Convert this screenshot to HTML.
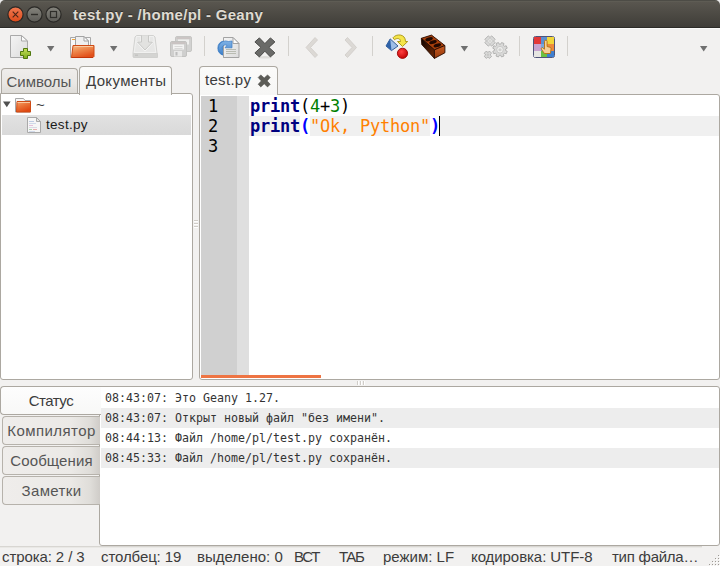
<!DOCTYPE html>
<html lang="ru">
<head>
<meta charset="utf-8">
<title>test.py - /home/pl - Geany</title>
<style>
html,body{margin:0;padding:0;}
body{width:720px;height:566px;overflow:hidden;background:#f2f1f0;position:relative;
  font-family:"Liberation Sans","DejaVu Sans",sans-serif;color:#3c3c3c;}
.abs{position:absolute;}
#corner{left:0;top:0;width:720px;height:10px;background:#ececec;}
#titlebar{left:0;top:0;width:720px;height:28px;background:linear-gradient(#4d4c46 0,#4d4c46 1px,#5e5c54 1px,#5e5c54 2px,#59564f 2px,#3f3d38 27px,#2c2b28 27px,#2c2b28 28px);border-radius:5px 5px 0 0;}
#title{left:73px;top:6px;font-size:15px;font-weight:bold;color:#dfdbd2;white-space:nowrap;line-height:18px;letter-spacing:.29px;text-shadow:0 -1px 0 rgba(0,0,0,.4);}
#toolbar{left:0;top:28px;width:720px;height:39px;background:linear-gradient(#fafaf9 0,#fafaf9 1px,#f2f1f0 1px,#f2f1f0 100%);}
.tab{box-sizing:border-box;border:1px solid #aca8a1;border-bottom:none;border-radius:4px 4px 0 0;font-size:15px;white-space:nowrap;}
.panel{box-sizing:border-box;background:#fff;border:1px solid #aca8a1;border-radius:3px;}
.mono{font-family:"DejaVu Sans Mono","Liberation Mono",monospace;}
#code{left:250px;top:96px;font-size:17px;letter-spacing:-0.234px;line-height:20px;white-space:pre;color:#000;}
#lnum{left:208px;top:96px;font-size:17px;line-height:20px;white-space:pre;color:#000;}
.kw{font-weight:bold;color:#00007f;}
.num{color:#007f00;}
.str{color:#ff8000;}
.br{color:#0000ff;font-weight:bold;}
#msgs div{height:20px;line-height:20px;font-size:11.63px;white-space:pre;padding-left:4px;margin-left:1px;color:#333;}
.st{top:548px;font-size:15px;line-height:17px;white-space:nowrap;color:#3c3c3c;}
.mt{left:2px;width:98px;height:29px;box-sizing:border-box;border:1px solid #b6b2ab;border-right:none;border-radius:4px 0 0 4px;font-size:15px;text-align:center;line-height:28px;background:linear-gradient(90deg,#efedeb 0,#ebe9e6 70%,#dfddd9 90%,#cfccc8 100%);color:#555;}
</style>
</head>
<body>
<div id="corner" class="abs"></div>
<div id="titlebar" class="abs"></div>
<div id="title" class="abs">test.py - /home/pl - Geany</div>
<div id="toolbar" class="abs"></div>
<svg class="abs" style="left:0;top:27px;" width="720" height="40" viewBox="0 0 720 40">
<defs>
<linearGradient id="gpage" x1="0" y1="0" x2="1" y2="1"><stop offset="0" stop-color="#f4f4f4"/><stop offset="1" stop-color="#dcdcdc"/></linearGradient>
<linearGradient id="gfold" x1="0" y1="0" x2="0.500" y2="1"><stop offset="0" stop-color="#f7c08c"/><stop offset="0.450" stop-color="#ee8a4e"/><stop offset="1" stop-color="#e2501a"/></linearGradient>
<linearGradient id="ggreen" x1="0" y1="0" x2="0" y2="1"><stop offset="0" stop-color="#c6e05a"/><stop offset="1" stop-color="#7cab1e"/></linearGradient>
<linearGradient id="gblue" x1="0" y1="0" x2="0" y2="1"><stop offset="0" stop-color="#7fb2e6"/><stop offset="1" stop-color="#3d7fc8"/></linearGradient>
<radialGradient id="gred" cx="0.4" cy="0.35" r="0.7"><stop offset="0" stop-color="#ff4040"/><stop offset="1" stop-color="#c00000"/></radialGradient>
<linearGradient id="gbrickL" x1="0" y1="0" x2="1" y2="1"><stop offset="0" stop-color="#0c0200"/><stop offset="1" stop-color="#742a04"/></linearGradient>
<linearGradient id="gbrickR" x1="0" y1="0" x2="0" y2="1"><stop offset="0" stop-color="#c85a20"/><stop offset="1" stop-color="#94380a"/></linearGradient>
</defs>
<!-- new document -->
<path d="M10.5 8.500h11l6 5.500v16.500h-17z" fill="url(#gpage)" stroke="#a9a9a9"/>
<path d="M21.500 8.500v5.500h6z" fill="#fbfbfb" stroke="#a9a9a9" stroke-linejoin="round"/>
<path d="M23.5 21.5h4v3h3v4h-3v3h-4v-3h-3v-4h3z" fill="url(#ggreen)" stroke="#50780f" stroke-linejoin="round"/>
<path d="M47 19h7.4l-3.7 5.6z" fill="#707070"/>
<!-- open folder -->
<path d="M70.500 10.500h20v20h-20z" fill="#f7f7f7" stroke="#a9a9a9"/>
<path d="M75.500 9.500h8.500l4.500 4.500v16h-13z" fill="#efefef" stroke="#a3a3a3"/>
<path d="M84 9.500v4.500h4.500z" fill="#fcfcfc" stroke="#a3a3a3" stroke-linejoin="round"/>
<rect x="72" y="12" width="3" height="1" fill="#f0a43a"/>
<path d="M73 18.500h21v11l-1 1h-21.500z" fill="url(#gfold)" stroke="#cf4a14" stroke-linejoin="round"/>
<path d="M71.500 30.500h21.500" stroke="#c2350a" stroke-width="1"/>
<path d="M74.500 19.500h18.500" stroke="#f9c9a0" stroke-width="1"/>
<path d="M110 19h7.400l-3.700 5.600z" fill="#707070"/>
<!-- save (disabled) -->
<path d="M136.500 8.500h17l1.500 1.500l2 16v3.500l-1 1h-22l-1-1v-3.500l2-16z" fill="#e7e7e6" stroke="#d2d2d0" stroke-linejoin="round"/>
<path d="M136.500 9.500h17l2.300 16h-21.600z" fill="none" stroke="#f1f1f0" stroke-width="1"/>
<path d="M133.500 26.500h24v4h-24z" fill="#d4d4d2" stroke="#d0d0ce"/>
<rect x="135" y="27.500" width="3" height="1.500" fill="#c4c4c2"/>
<path d="M141.500 10.500h7v4.500h4l-7.500 8l-7.500-8h4z" fill="#e2e2e0" stroke="#f6f6f5" stroke-width="2.200" stroke-linejoin="round"/>
<path d="M141.500 8.500v6.500h-4l7.500 8l7.500-8h-4v-6.500" fill="#e2e2e0" stroke="#c4c4c2" stroke-width="0.900" stroke-linejoin="round"/>
<!-- save all (disabled) -->
<rect x="175.500" y="9.500" width="16" height="15" rx="1.500" fill="#d2d2d1" stroke="#c6c6c4"/>
<rect x="176.500" y="10" width="14" height="2" fill="#cbc5c4"/>
<rect x="178" y="12.500" width="11" height="5" fill="#efefee"/>
<rect x="170.500" y="14.500" width="16" height="15" rx="1.500" fill="#cfcfce" stroke="#c2c2c0"/>
<rect x="171.500" y="15" width="14" height="2" fill="#c9c3c2"/>
<rect x="173" y="17.500" width="11" height="5" fill="#f3f3f2"/>
<path d="M174.500 19.500h8M174.500 21.500h8" stroke="#d9d9d8" stroke-width="1"/>
<rect x="174" y="24" width="8" height="5.500" fill="#e9e9e8"/>
<rect x="175.500" y="25" width="2" height="3.500" fill="#bcbcbb"/>
<!-- separators -->
<g fill="#d3d1cd"><rect x="204" y="9" width="1" height="20"/><rect x="288" y="9" width="1" height="20"/><rect x="372" y="9" width="1" height="20"/><rect x="519" y="9" width="1" height="20"/><rect x="567" y="9" width="1" height="20"/></g>
<!-- reload -->
<path d="M223.500 28.200A7.300 7.300 0 0 1 223.500 14" fill="#5a98d6" stroke="#3c7cc4" stroke-width="0.800"/>
<path d="M223.500 10.500h9.500l6 6v14h-15.500z" fill="url(#gpage)" stroke="#a3a3a3"/>
<path d="M233 10.500v6h6z" fill="#fcfcfc" stroke="#a3a3a3" stroke-linejoin="round"/>
<g stroke="#b9bcb2" stroke-width="1"><path d="M226 22.500h10M226 24.500h10M226 26.500h10"/></g>
<path d="M223.500 28.200A7.300 7.300 0 1 1 228.500 14.500L232 14v6.800h-7l2-2.400A3.200 3.200 0 0 0 222.300 22.200L223.500 23.750z" fill="url(#gblue)" stroke="#3c7cc4" stroke-width="0.700" stroke-linejoin="round"/>
<path d="M223 21.800h1v8.700h-1z" fill="#a3a3a3"/>
<path d="M224 23.800h2v6.200h-2z" fill="#ececec"/>
<!-- close -->
<ellipse cx="264.900" cy="30.300" rx="7" ry="1.200" fill="#dddcd9"/>
<path d="M259.400 10.900L264.900 16.600L270.400 10.900L274.900 14.900L268.900 20.400L274.900 25.900L270.400 29.900L264.900 24.200L259.400 29.900L254.900 25.900L260.900 20.400L254.900 14.900Z" fill="#6a6a68" stroke="#4c4c4a" stroke-width="1" stroke-linejoin="round"/>
<!-- chevrons -->
<path d="M315 10.500l2.500 2.500l-7 7.500l7 7.500l-2.500 2.500l-9-10z" fill="#dcd9d5" stroke="#cfccc8" stroke-width="0.800" stroke-linejoin="round"/>
<path d="M347.500 10.500l-2.500 2.500l7 7.500l-7 7.500l2.500 2.500l9-10z" fill="#dcd9d5" stroke="#cfccc8" stroke-width="0.800" stroke-linejoin="round"/>
<!-- compile -->
<path d="M390.200 11.900l7.800 7.100l-6.500 4.600l-5.500-4.600z" fill="#9dbde6" stroke="#24508f" stroke-width="0.900" stroke-linejoin="round"/>
<path d="M390.200 11.900l1.300 11.700l-5.500-4.600z" fill="#2f62a8"/>
<path d="M393 10.800C396 6.500 405.500 6.500 405.500 14.500h2.200l-5.200 5l-5-5h3C400.500 11.500 397.500 10.500 394.500 12.700z" fill="#f5e54a" stroke="#a89410" stroke-width="0.900" stroke-linejoin="round"/>
<circle cx="402.500" cy="26.300" r="5.100" fill="url(#gred)" stroke="#9a0000" stroke-width="0.900"/>
<!-- brick -->
<path d="M421.300 11.300l10.200-3.200l13.400 10.400l-10.500 4.400z" fill="#a8400c" stroke="#2a0c00" stroke-width="0.900" stroke-linejoin="round"/>
<path d="M421.300 11.300l13.100 11.600v8.500l-12.600-13.800z" fill="url(#gbrickL)" stroke="#2a0c00" stroke-width="0.900" stroke-linejoin="round"/>
<path d="M434.400 22.900l10.500-4.400v7.300l-10.500 5.600z" fill="url(#gbrickR)" stroke="#2a0c00" stroke-width="0.900" stroke-linejoin="round"/>
<g fill="#200800"><ellipse cx="429.100" cy="12.200" rx="3.900" ry="1.800" transform="rotate(-17 429.100 12.200)"/><ellipse cx="433" cy="15.100" rx="3.900" ry="1.800" transform="rotate(-17 433 15.100)"/><ellipse cx="437.300" cy="18.400" rx="3.900" ry="1.800" transform="rotate(-17 437.300 18.400)"/></g>
<path d="M460.700 19h7.400l-3.700 5.600z" fill="#707070"/>
<!-- gears (disabled) -->
<g fill="#d9d9d8" stroke="#adadab" stroke-width="0.900" stroke-linejoin="round">
<path d="M505.56 23.43L507.23 24.34L506.23 26.74L504.41 26.20L503.45 27.16L503.99 28.98L501.59 29.98L500.68 28.31L499.32 28.31L498.41 29.98L496.01 28.98L496.55 27.16L495.59 26.20L493.77 26.74L492.77 24.34L494.44 23.43L494.44 22.07L492.77 21.16L493.77 18.76L495.59 19.30L496.55 18.34L496.01 16.52L498.41 15.52L499.32 17.19L500.68 17.19L501.59 15.52L503.99 16.52L503.45 18.34L504.41 19.30L506.23 18.76L507.23 21.16L505.56 22.07Z"/>
<path d="M494.07 14.51L495.14 15.67L491.67 19.14L490.51 18.07L489.49 18.07L488.33 19.14L484.86 15.67L485.93 14.51L485.93 13.49L484.86 12.33L488.33 8.86L489.49 9.93L490.51 9.93L491.67 8.86L495.14 12.33L494.07 13.49Z"/>
<path d="M490.45 28.28L491.60 29.28L489.43 31.45L488.43 30.30L487.37 30.30L486.37 31.45L484.20 29.28L485.35 28.28L485.35 27.22L484.20 26.22L486.37 24.05L487.37 25.20L488.43 25.20L489.43 24.05L491.60 26.22L490.45 27.22Z"/>
</g>
<circle cx="500" cy="22.750" r="3.300" fill="#efefee" stroke="#c2c2c0" stroke-width="0.800"/>
<circle cx="500" cy="22.750" r="1.600" fill="#d0d0ce"/>
<circle cx="490" cy="14" r="2.300" fill="#efefee" stroke="#c2c2c0" stroke-width="0.800"/>
<circle cx="490" cy="14" r="1" fill="#d0d0ce"/>
<circle cx="487.900" cy="27.750" r="1.200" fill="#c8c8c6"/>
<!-- color chooser -->
<rect x="533.500" y="9.500" width="21" height="21" rx="2" fill="#e8e8e4" stroke="#4f5478"/>
<rect x="534" y="10" width="7" height="7" fill="#e23838"/>
<rect x="541" y="10" width="6" height="7" fill="#5b8fd0"/>
<rect x="547" y="10" width="7" height="7" fill="#f2d63a"/>
<rect x="534" y="17" width="7" height="7" fill="#c7a3d0"/>
<rect x="541" y="17" width="6" height="7" fill="#7aa7dc"/>
<rect x="547" y="17" width="7" height="7" fill="#ee8a3a"/>
<rect x="534" y="24" width="7" height="6" fill="#e6e6e2"/>
<rect x="541" y="24" width="6" height="6" fill="#6bc043"/>
<rect x="547" y="24" width="7" height="6" fill="#3f7fd0"/>
<path d="M544.500 14.500a1.300 1.300 0 0 1 2.600 0v5l3 0.800a1.500 1.500 0 0 1 1 1.600l-0.700 4.600h-6l-3-4.300a1.100 1.100 0 0 1 1.700-1.300l1.400 1.400z" fill="#f6cf96" stroke="#b5700f" stroke-width="0.900" stroke-linejoin="round"/>
<path d="M700 19h7.400l-3.700 5.600z" fill="#707070"/>
</svg>


<!-- sidebar -->
<div id="side" class="abs panel" style="left:0;top:93px;width:193px;height:287px;border-top-left-radius:0;"></div>
<div id="tabSym" class="abs tab" style="left:1px;top:68px;width:77px;height:25px;background:linear-gradient(#efedeb 0,#e9e7e4 60%,#dedcd8 100%);color:#555;line-height:25px;padding-left:4.5px;">Символы</div>
<div id="tabDoc" class="abs tab" style="left:79px;top:66px;width:93px;height:29px;background:linear-gradient(#fbfbfa,#f6f6f5);line-height:27px;padding-left:6px;letter-spacing:.35px;">Документы</div>
<div class="abs" style="left:2px;top:115px;width:189px;height:20px;background:linear-gradient(#e2e2e2,#d9d9d9);"></div>
<div id="tilde" class="abs" style="left:36px;top:96px;font-size:15px;line-height:18px;">~</div>
<div id="tfile" class="abs" style="left:46px;top:117px;font-size:13.5px;line-height:16px;color:#1a1a1a;letter-spacing:.3px;">test.py</div>

<!-- editor -->
<div id="editor" class="abs panel" style="left:199px;top:94px;width:521px;height:286px;border-top-left-radius:0;"></div>
<div id="tabEd" class="abs tab" style="left:199px;top:66px;width:79px;height:29px;background:linear-gradient(#fbfbfa,#f6f6f5);line-height:25.5px;padding-left:5px;letter-spacing:.3px;"><span id="tabEdT">test.py</span></div>
<div class="abs" style="left:201px;top:96px;width:36px;height:279px;background:#d0d0d0;"></div>
<div class="abs" style="left:237px;top:96px;width:12px;height:279px;background:#dfdfdf;"></div>
<div class="abs" style="left:249px;top:116px;width:470px;height:20px;background:#f0f0f0;"></div>
<div class="abs" style="left:300px;top:116px;width:10px;height:20px;background:#fff;"></div>
<div class="abs" style="left:430px;top:116px;width:10px;height:20px;background:#fff;"></div>
<div id="lnum" class="abs mono">1
2
3</div>
<div id="code" class="abs mono"><span class="kw">print</span>(<span class="num">4</span>+<span class="num">3</span>)
<span class="kw">print</span><span class="br">(</span><span class="str">"Ok, Python"</span><span class="br">)</span></div>
<div class="abs" style="left:439px;top:116px;width:1px;height:20px;background:#000;"></div>
<div class="abs" style="left:201px;top:375px;width:120px;height:3px;background:#ee7443;"></div>

<!-- message window -->
<div id="msgs" class="abs panel mono" style="left:99px;top:386px;width:621px;height:160px;border-top-left-radius:0;">
<div style="margin-top:1px;">08:43:07: Это Geany 1.27.</div>
<div style="background:#ededed;">08:43:07: Открыт новый файл "без имени".</div>
<div>08:44:13: Файл /home/pl/test.py сохранён.</div>
<div style="background:#ededed;">08:45:33: Файл /home/pl/test.py сохранён.</div>
</div>
<div id="mt1" class="abs mt" style="left:0;width:101px;top:386px;height:29px;background:linear-gradient(#fdfdfd,#f8f8f7);color:#3c3c3c;line-height:28px;border-color:#aca8a1;letter-spacing:-.5px;">Статус</div>
<div id="mt2" class="abs mt" style="top:416px;letter-spacing:.42px;">Компилятор</div>
<div id="mt3" class="abs mt" style="top:446px;letter-spacing:.1px;">Сообщения</div>
<div id="mt4" class="abs mt" style="top:476px;letter-spacing:.38px;">Заметки</div>

<!-- status bar -->
<div class="abs" style="left:0;top:546px;width:702px;height:1px;background:#d8d6d2;"></div>
<div class="abs" style="left:0;top:547px;width:702px;height:1px;background:#e9e8e5;"></div>
<div id="s1" class="abs st" style="left:2px;letter-spacing:-.1px;">строка: 2 / 3</div>
<div id="s2" class="abs st" style="left:101px;letter-spacing:-.1px;">столбец: 19</div>
<div id="s3" class="abs st" style="left:197px;">выделено: 0</div>
<div id="s4" class="abs st" style="left:294px;letter-spacing:-1.3px;">ВСТ</div>
<div id="s5" class="abs st" style="left:339px;letter-spacing:-1.3px;">ТАБ</div>
<div id="s6" class="abs st" style="left:383px;">режим: LF</div>
<div id="s7" class="abs st" style="left:471px;letter-spacing:-.07px;">кодировка: UTF-8</div>
<div id="s8" class="abs st" style="left:612px;letter-spacing:-.25px;">тип файла…</div>
<svg class="abs" style="left:0;top:0;" width="720" height="566" viewBox="0 0 720 566">
<defs>
<linearGradient id="gclose" x1="0" y1="0" x2="0" y2="1"><stop offset="0" stop-color="#f27a52"/><stop offset="1" stop-color="#dc4a1a"/></linearGradient>
<linearGradient id="gbtn" x1="0" y1="0" x2="0" y2="1"><stop offset="0" stop-color="#85847d"/><stop offset="1" stop-color="#5c5b56"/></linearGradient>
<linearGradient id="gfold2" x1="0" y1="0" x2="0.500" y2="1"><stop offset="0" stop-color="#f4a56c"/><stop offset="0.500" stop-color="#ea7236"/><stop offset="1" stop-color="#df4812"/></linearGradient>
</defs>
<!-- window buttons -->
<circle cx="15.500" cy="14.500" r="7.600" fill="url(#gclose)" stroke="#2b2825" stroke-width="1.200"/>
<circle cx="34.500" cy="14.500" r="7.600" fill="url(#gbtn)" stroke="#2a2926" stroke-width="1.200"/>
<circle cx="53.500" cy="14.500" r="7.600" fill="url(#gbtn)" stroke="#2a2926" stroke-width="1.200"/>
<path d="M12.700 11.700l5.600 5.600M18.300 11.700l-5.600 5.600" stroke="#4a2417" stroke-width="1.100" fill="none"/>
<path d="M31 14.500h7" stroke="#2f2e2a" stroke-width="1.400"/>
<rect x="50.500" y="11.500" width="6" height="6" fill="none" stroke="#2f2e2a" stroke-width="1.200"/>
<!-- tree expander + folder + file -->
<path d="M3 101.500h7.600l-3.800 5.700z" fill="#505050"/>
<path d="M15.500 98.500h8l1.500 2h5.500v11.500h-15z" fill="#f7f7f7" stroke="#a8a8a8"/>
<path d="M17 101.500h13.500v10.500h-14z" fill="url(#gfold2)" stroke="#cf4a14" stroke-linejoin="round"/>
<path d="M17.500 102.500h12.500" stroke="#f9c9a0"/>
<path d="M27.500 117.500h9l4 4v11h-13z" fill="#f6f6f6" stroke="#a9a9a9"/>
<path d="M36.500 117.500v4h4z" fill="#e4e4e4" stroke="#a9a9a9" stroke-linejoin="round"/>
<g stroke-width="1" opacity="0.600"><path d="M29 121.500h5" stroke="#9ab0d8"/><path d="M29 123.500h7" stroke="#b7c6e2"/><path d="M29 125.500h4" stroke="#d9a0c8"/><path d="M29 127.500h8" stroke="#c9c9d9"/><path d="M29 129.500h3" stroke="#7fbf7f"/><path d="M33 129.500h4" stroke="#e08080"/><path d="M29 131.500h6" stroke="#b7c6e2"/></g>
<!-- tab close -->
<path d="M260.80 74.90L264.20 78.00L267.60 74.90L270.20 77.50L267.10 80.90L270.20 84.30L267.60 86.90L264.20 83.80L260.80 86.90L258.20 84.30L261.30 80.90L258.20 77.50Z" fill="#5c5c57" stroke="#4c4c47" stroke-width="0.600" stroke-linejoin="round"/>
<!-- paned handles -->
<g fill="#d0cdc8"><rect x="194" y="220" width="4" height="1"/><rect x="194" y="223" width="4" height="1"/><rect x="194" y="226" width="4" height="1"/>
<rect x="357" y="381" width="1" height="4"/><rect x="360" y="381" width="1" height="4"/><rect x="363" y="381" width="1" height="4"/></g>
<g fill="#ffffff"><rect x="194" y="221" width="4" height="1"/><rect x="194" y="224" width="4" height="1"/><rect x="194" y="227" width="4" height="1"/>
<rect x="358" y="381" width="1" height="4"/><rect x="361" y="381" width="1" height="4"/><rect x="364" y="381" width="1" height="4"/></g>
<!-- resize grip -->
<g fill="#ffffff"><rect x="719" y="556" width="1" height="1"/><rect x="716" y="559" width="1" height="1"/><rect x="719" y="559" width="1" height="1"/><rect x="713" y="562" width="1" height="1"/><rect x="716" y="562" width="1" height="1"/><rect x="719" y="562" width="1" height="1"/><rect x="710" y="565" width="1" height="1"/><rect x="713" y="565" width="1" height="1"/><rect x="716" y="565" width="1" height="1"/><rect x="719" y="565" width="1" height="1"/></g>
<g fill="#9d9993"><rect x="718" y="555" width="1" height="1"/><rect x="715" y="558" width="1" height="1"/><rect x="718" y="558" width="1" height="1"/><rect x="712" y="561" width="1" height="1"/><rect x="715" y="561" width="1" height="1"/><rect x="718" y="561" width="1" height="1"/><rect x="709" y="564" width="1" height="1"/><rect x="712" y="564" width="1" height="1"/><rect x="715" y="564" width="1" height="1"/><rect x="718" y="564" width="1" height="1"/></g>
</svg>

</body>
</html>
